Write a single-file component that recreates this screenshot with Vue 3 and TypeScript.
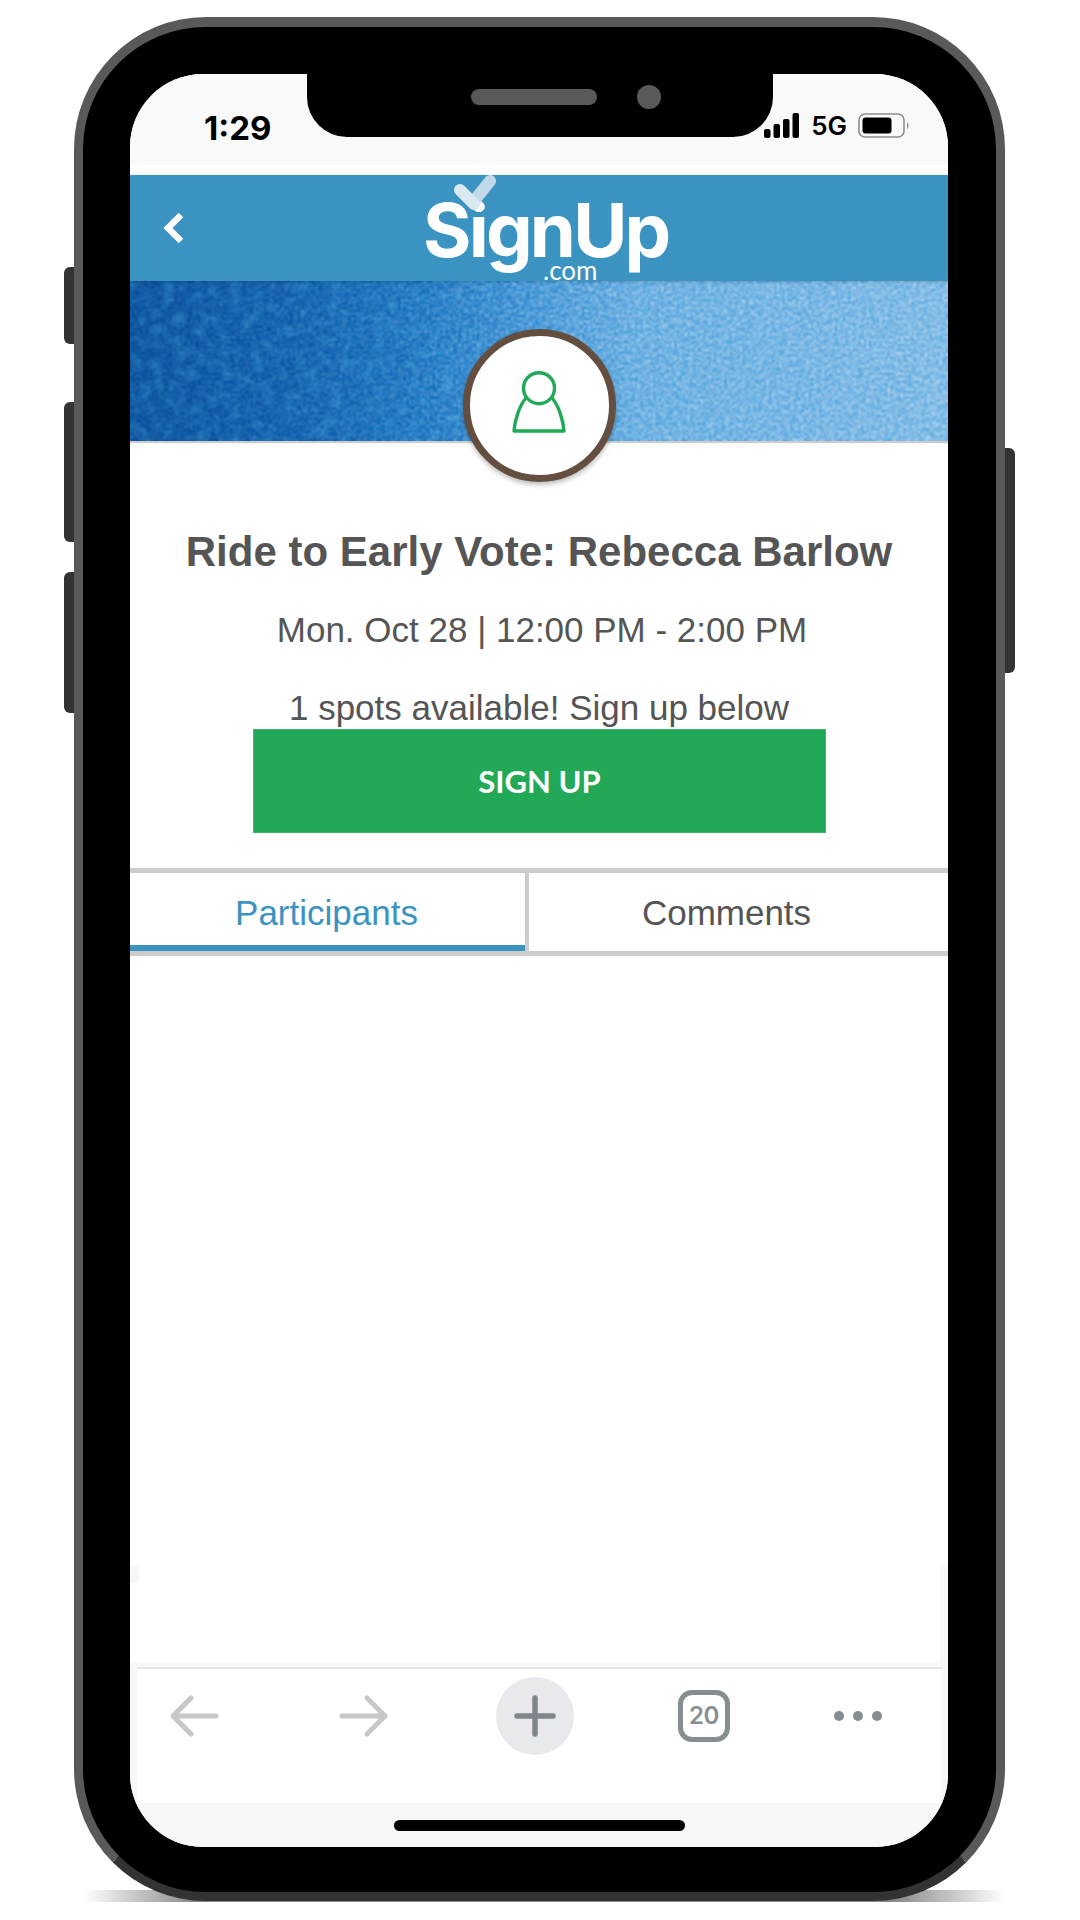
<script setup lang="ts">
const banner = 'banner'
const tabs = [
  { label: 'Participants', active: true },
  { label: 'Comments', active: false }
]
</script>

<template>
  <div class="page">
    <div class="phone">
      <span class="side-btn left b1"></span>
      <span class="side-btn left b2"></span>
      <span class="side-btn left b3"></span>
      <span class="side-btn right b4"></span>

      <div class="notch">
        <span class="speaker"></span>
        <span class="camera"></span>
      </div>

      <div class="screen">
        <div class="status-bar">
          <span class="time">1:29</span>
          <div class="status-right">
            <svg width="38" height="26" viewBox="0 0 38 26">
              <rect x="2" y="16" width="6.5" height="9" rx="2" />
              <rect x="11.5" y="11" width="6.5" height="14" rx="2" />
              <rect x="21" y="6" width="6.5" height="19" rx="2" />
              <rect x="30.5" y="0" width="6.5" height="25" rx="2" />
            </svg>
            <span class="net">5G</span>
            <svg width="52" height="26" viewBox="0 0 52 26">
              <rect x="1" y="1" width="45" height="23" rx="6" fill="none" stroke="#8d8d8d" stroke-width="1.6" />
              <rect x="4.5" y="4.5" width="29" height="16" rx="3" fill="#000" />
              <path d="M49 9 C51 10 51 15 49 16 Z" fill="#8d8d8d" />
            </svg>
          </div>
        </div>

        <header class="app-header">
          <svg class="back" width="24" height="34" viewBox="0 0 24 34">
            <path d="M19 4 L6 17 L19 30" fill="none" stroke="#fff" stroke-width="6.5" />
          </svg>
          <div class="logo">
            <span class="logo-word">SignUp</span>
            <svg class="logo-check" width="46" height="40" viewBox="0 0 46 40">
              <path d="M22 27 L38 7" fill="none" stroke="#c1d9e8" stroke-width="12" stroke-linecap="round" />
              <path d="M8 16 L22 30" fill="none" stroke="#d9e8f1" stroke-width="12" stroke-linecap="round" />
            </svg>
            <span class="logo-com">.com</span>
          </div>
        </header>

        <div :class="banner">
          <svg class="banner-noise" width="818" height="160" preserveAspectRatio="none">
            <defs>
              <linearGradient id="wash" x1="0" y1="0" x2="1" y2="0">
                <stop offset="0" stop-color="#07509c" />
                <stop offset="0.2" stop-color="#0a5aa9" />
                <stop offset="0.36" stop-color="#1670bd" />
                <stop offset="0.48" stop-color="#3189d0" />
                <stop offset="0.62" stop-color="#5aa6de" />
                <stop offset="1" stop-color="#74b3e3" />
              </linearGradient>
              <linearGradient id="fadeIn" x1="0" y1="0" x2="1" y2="0">
                <stop offset="0" stop-color="#fff" stop-opacity="0.2" />
                <stop offset="0.3" stop-color="#fff" stop-opacity="0.4" />
                <stop offset="0.55" stop-color="#fff" stop-opacity="0.9" />
                <stop offset="1" stop-color="#fff" stop-opacity="1" />
              </linearGradient>
              <mask id="grainMask">
                <rect width="818" height="160" fill="url(#fadeIn)" />
              </mask>
              <filter id="grain" x="0" y="0" width="100%" height="100%">
                <feTurbulence type="fractalNoise" baseFrequency="0.38" numOctaves="3" seed="11" />
                <feGaussianBlur stdDeviation="1" />
                <feColorMatrix type="matrix" values="0 0 0 0 0.78  0 0 0 0 0.88  0 0 0 0 0.96  3 0 0 0 -1.2" />
              </filter>
              <filter id="grainDark" x="0" y="0" width="100%" height="100%">
                <feTurbulence type="fractalNoise" baseFrequency="0.09" numOctaves="4" seed="4" />
                <feGaussianBlur stdDeviation="1.5" />
                <feColorMatrix type="matrix" values="0 0 0 0 0.05  0 0 0 0 0.38  0 0 0 0 0.72  2.4 0 0 0 -1" />
              </filter>
            </defs>
            <rect width="818" height="160" fill="url(#wash)" />
            <rect width="818" height="160" filter="url(#grainDark)" opacity="0.4" />
            <rect width="818" height="160" filter="url(#grain)" mask="url(#grainMask)" opacity="0.6" />
          </svg>
        </div>

        <div class="avatar">
          <svg width="56" height="64" viewBox="0 0 56 64">
            <circle cx="28" cy="18.2" r="15.5" fill="none" stroke="#21a957" stroke-width="3.4" />
            <path d="M15 28 C8 36 4 50 3 61 L53 61 C52 50 48 36 41 28" fill="none" stroke="#21a957" stroke-width="3.4" stroke-linejoin="round" />
          </svg>
        </div>

        <div class="details">
          <h1 class="title">Ride to Early Vote: Rebecca Barlow</h1>
          <p class="when">Mon. Oct 28 | 12:00 PM - 2:00 PM</p>
          <p class="spots">1 spots available! Sign up below</p>
          <button class="signup">SIGN UP</button>
        </div>

        <div class="tabs">
          <div v-for="t in tabs" :key="t.label" class="tab" :class="{ active: t.active }">{{ t.label }}</div>
        </div>

        <div class="content">
          <div class="content-foot"></div>
        </div>

        <div class="browser-wrap">
          <nav class="browser-bar">
            <svg width="50" height="42" viewBox="0 0 50 42">
              <path d="M47 21 H4 M22 3 L4 21 L22 39" fill="none" stroke="#c8c8c8" stroke-width="5" stroke-linecap="round" stroke-linejoin="round" />
            </svg>
            <svg width="50" height="42" viewBox="0 0 50 42">
              <path d="M3 21 H46 M28 3 L46 21 L28 39" fill="none" stroke="#c8c8c8" stroke-width="5" stroke-linecap="round" stroke-linejoin="round" />
            </svg>
            <div class="plus">
              <svg width="42" height="42" viewBox="0 0 42 42">
                <path d="M21 3 V39 M3 21 H39" fill="none" stroke="#7f868b" stroke-width="5.5" stroke-linecap="round" />
              </svg>
            </div>
            <div class="tab-count">20</div>
            <div class="dots"><i></i><i></i><i></i></div>
          </nav>
        </div>

        <div class="home-area"><span class="home-bar"></span></div>
      </div>
    </div>
    <div class="phone-shadow"></div>
  </div>
</template>

<style>
html, body {
  margin: 0;
  background: #fff;
}
</style>

<style scoped>
.page {
  position: relative;
  width: 1080px;
  height: 1920px;
  padding: 17px 0 0 74px;
  box-sizing: border-box;
  overflow: hidden;
  font-family: "Liberation Sans", Arial, sans-serif;
  color: #555;
}

.phone {
  position: relative;
  z-index: 1;
  width: 931px;
  height: 1884px;
  box-sizing: border-box;
  padding: 47px 47px 45px 47px;
  background: #000;
  border: 10px solid #595959;
  border-width: 10px 9px 9px 9px;
  border-bottom-color: #333;
  border-radius: 132px;
}

.phone-shadow {
  position: absolute;
  left: 84px;
  top: 1890px;
  width: 920px;
  height: 12px;
  background: linear-gradient(90deg, transparent, #888 12%, #888 88%, transparent);
}

.side-btn {
  position: absolute;
  width: 10px;
  background: #333;
}
.side-btn.left {
  left: -19px;
  border-radius: 6px 0 0 6px;
}
.side-btn.right {
  right: -19px;
  border-radius: 0 6px 6px 0;
}
.b1 { top: 240px; height: 77px; }
.b2 { top: 375px; height: 140px; }
.b3 { top: 545px; height: 141px; }
.b4 { top: 421px; height: 225px; }

.notch {
  position: absolute;
  z-index: 3;
  top: 47px;
  left: 224px;
  width: 466px;
  height: 63px;
  background: #000;
  border-radius: 0 0 40px 40px;
}
.speaker {
  position: absolute;
  left: 164px;
  top: 15px;
  width: 126px;
  height: 16px;
  border-radius: 8px;
  background: #595959;
}
.camera {
  position: absolute;
  left: 330px;
  top: 11px;
  width: 24px;
  height: 24px;
  border-radius: 50%;
  background: #595959;
}

.screen {
  position: relative;
  width: 818px;
  height: 1773px;
  display: flex;
  flex-direction: column;
  background: #fff;
  border-radius: 73px;
  overflow: hidden;
}

.status-bar {
  flex: none;
  height: 91px;
  margin-bottom: 10px;
  background: #f9f9f9;
  box-sizing: border-box;
  padding: 35px 38px 0 74px;
  display: flex;
  justify-content: space-between;
  align-items: flex-start;
  color: #000;
  font-family: Inter, sans-serif;
}
.time {
  font-size: 33px;
  font-weight: 700;
  line-height: 38px;
}
.status-right {
  display: flex;
  align-items: center;
  gap: 11px;
  margin-top: 4px;
}
.status-right svg:first-child {
  fill: #000;
}
.net {
  font-size: 26px;
  font-weight: 600;
  line-height: 26px;
}

.app-header {
  flex: none;
  position: relative;
  z-index: 1;
  height: 106px;
  background: #3a93c0;
  box-shadow: 0 1px 3px rgba(0, 0, 0, 0.2);
  display: flex;
  align-items: center;
  justify-content: center;
}
.back {
  position: absolute;
  left: 32px;
  top: 36px;
}
.logo {
  position: relative;
  width: 242px;
  height: 106px;
  margin-left: 14px;
  color: #fff;
}
.logo-word {
  position: absolute;
  left: -2px;
  top: 26px;
  font-family: Inter, sans-serif;
  font-size: 74px;
  font-weight: 700;
  line-height: 58px;
  letter-spacing: -2.8px;
  white-space: nowrap;
}
.logo-com {
  position: absolute;
  left: 118px;
  top: 85px;
  font-family: Lato, sans-serif;
  font-size: 26px;
  line-height: 20px;
}
.logo-check {
  position: absolute;
  left: 27px;
  top: -1px;
}

.banner {
  flex: none;
  height: 160px;
  box-shadow: 0 2px 1px #ccc;
}
.banner-noise {
  display: block;
}

.avatar {
  flex: none;
  position: relative;
  z-index: 2;
  align-self: center;
  width: 153px;
  height: 153px;
  margin-top: -112px;
  box-sizing: border-box;
  border: 7px solid #634e3f;
  border-radius: 50%;
  background: #fff;
  box-shadow: 0 3px 5px rgba(0, 0, 0, 0.25);
  display: flex;
  align-items: center;
  justify-content: center;
}
.avatar svg {
  margin-bottom: 8px;
}

.details {
  flex: none;
  height: 386px;
  text-align: center;
}
.title {
  margin: 47px 0 0;
  font-size: 42px;
  font-weight: 700;
  line-height: 46px;
  color: #555;
}
.when {
  margin: 33px 0 0;
  padding-left: 6px;
  font-size: 35px;
  line-height: 44px;
}
.spots {
  margin: 38px 0 0;
  font-size: 35px;
  line-height: 36px;
}
.signup {
  display: block;
  width: 573px;
  height: 104px;
  margin: 3px auto 0 123px;
  padding: 0;
  border: 1px solid #3eb56f;
  background: #21a957;
  color: #fff;
  font-family: Lato, sans-serif;
  font-size: 31px;
  font-weight: 700;
}

.tabs {
  flex: none;
  display: grid;
  grid-template-columns: 399px 1fr;
  border-top: 5px solid #ccc;
  border-bottom: 5px solid #ccc;
}
.tab {
  height: 78px;
  box-sizing: border-box;
  padding-right: 24px;
  text-align: center;
  font-size: 35px;
  line-height: 80px;
  color: #555;
}
.tab.active {
  padding-right: 2px;
  color: #3a93c0;
  border-right: 4px solid #ccc;
  box-shadow: inset 0 -6px 0 #3a93c0;
}

.content {
  flex: 1;
  display: flex;
  flex-direction: column;
  justify-content: flex-end;
}
.content-foot {
  height: 96px;
  box-sizing: border-box;
  border-right: 8px solid #f8f8f8;
  background: linear-gradient(90deg, #f6f6f6 9px, #fff 9px) no-repeat 0 0 / 100% 17px;
}

.browser-wrap {
  flex: none;
  padding: 5px 5px 0 7px;
  background: linear-gradient(180deg, #f8f8f8 5px, transparent 5px), linear-gradient(90deg, #f7f7f7 7px, #fff 7px 811px, #f8f8f8 811px);
}
.browser-bar {
  height: 136px;
  box-sizing: border-box;
  padding: 0 0 40px 32px;
  border-top: 2px solid #e6e6e6;
  display: flex;
  align-items: center;
}
.browser-bar > svg:nth-child(2) {
  margin-left: 120px;
}
.plus {
  width: 78px;
  height: 78px;
  margin-left: 107px;
  border-radius: 50%;
  background: #e8e9ed;
  display: flex;
  align-items: center;
  justify-content: center;
}
.tab-count {
  width: 52px;
  height: 52px;
  margin-left: 104px;
  box-sizing: border-box;
  border: 5px solid #878e91;
  border-radius: 14px;
  font-family: Inter, sans-serif;
  font-size: 24px;
  font-weight: 600;
  line-height: 42px;
  letter-spacing: -0.5px;
  text-align: center;
  color: #878e91;
}
.dots {
  display: flex;
  gap: 9px;
  margin-left: 104px;
}
.dots i {
  width: 10px;
  height: 10px;
  border-radius: 50%;
  background: #878e91;
}

.home-area {
  flex: none;
  height: 44px;
  background: #f8f8f8;
  display: flex;
  justify-content: center;
}
.home-bar {
  width: 291px;
  height: 11px;
  margin-top: 17px;
  border-radius: 6px;
  background: #000;
}
</style>
